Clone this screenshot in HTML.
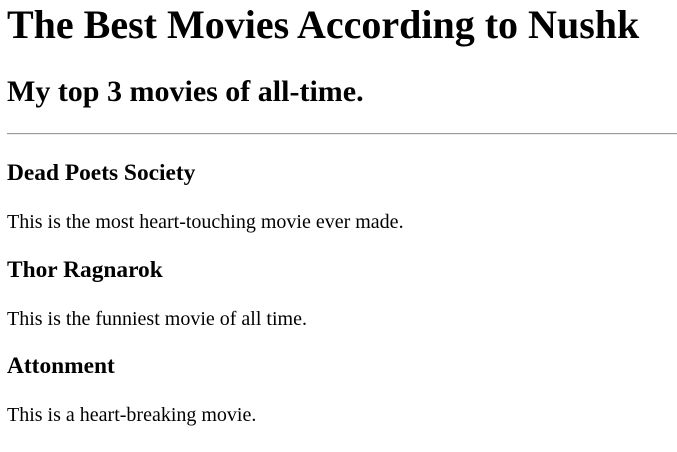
<!DOCTYPE html>
<html><head><meta charset="utf-8"><style>
html,body{margin:0;padding:0;background:#fff;width:677px;height:452px;overflow:hidden}
body{font-family:"Liberation Serif",serif;color:#000;position:relative}
.t{position:absolute;left:7px;margin:0;line-height:1;white-space:nowrap}
h1.t{font-size:40px;font-weight:bold;top:5px}
h2.t{font-size:30px;font-weight:bold;top:77px}
h3.t{font-size:23.4px;font-weight:bold}
p.t{font-size:20px}
.hr{position:absolute;left:7px;right:0;top:133px;height:0;border-top:1px solid #9a9a9a;border-bottom:1px solid #eee}
</style></head><body>
<h1 class="t">The Best Movies According to Nushk</h1>
<h2 class="t">My top 3 movies of all-time.</h2>
<div class="hr"></div>
<h3 class="t" style="top:162px">Dead Poets Society</h3>
<p class="t" style="top:212px">This is the most heart-touching movie ever made.</p>
<h3 class="t" style="top:259px">Thor Ragnarok</h3>
<p class="t" style="top:309px">This is the funniest movie of all time.</p>
<h3 class="t" style="top:355px">Attonment</h3>
<p class="t" style="top:405px">This is a heart-breaking movie.</p>
</body></html>
